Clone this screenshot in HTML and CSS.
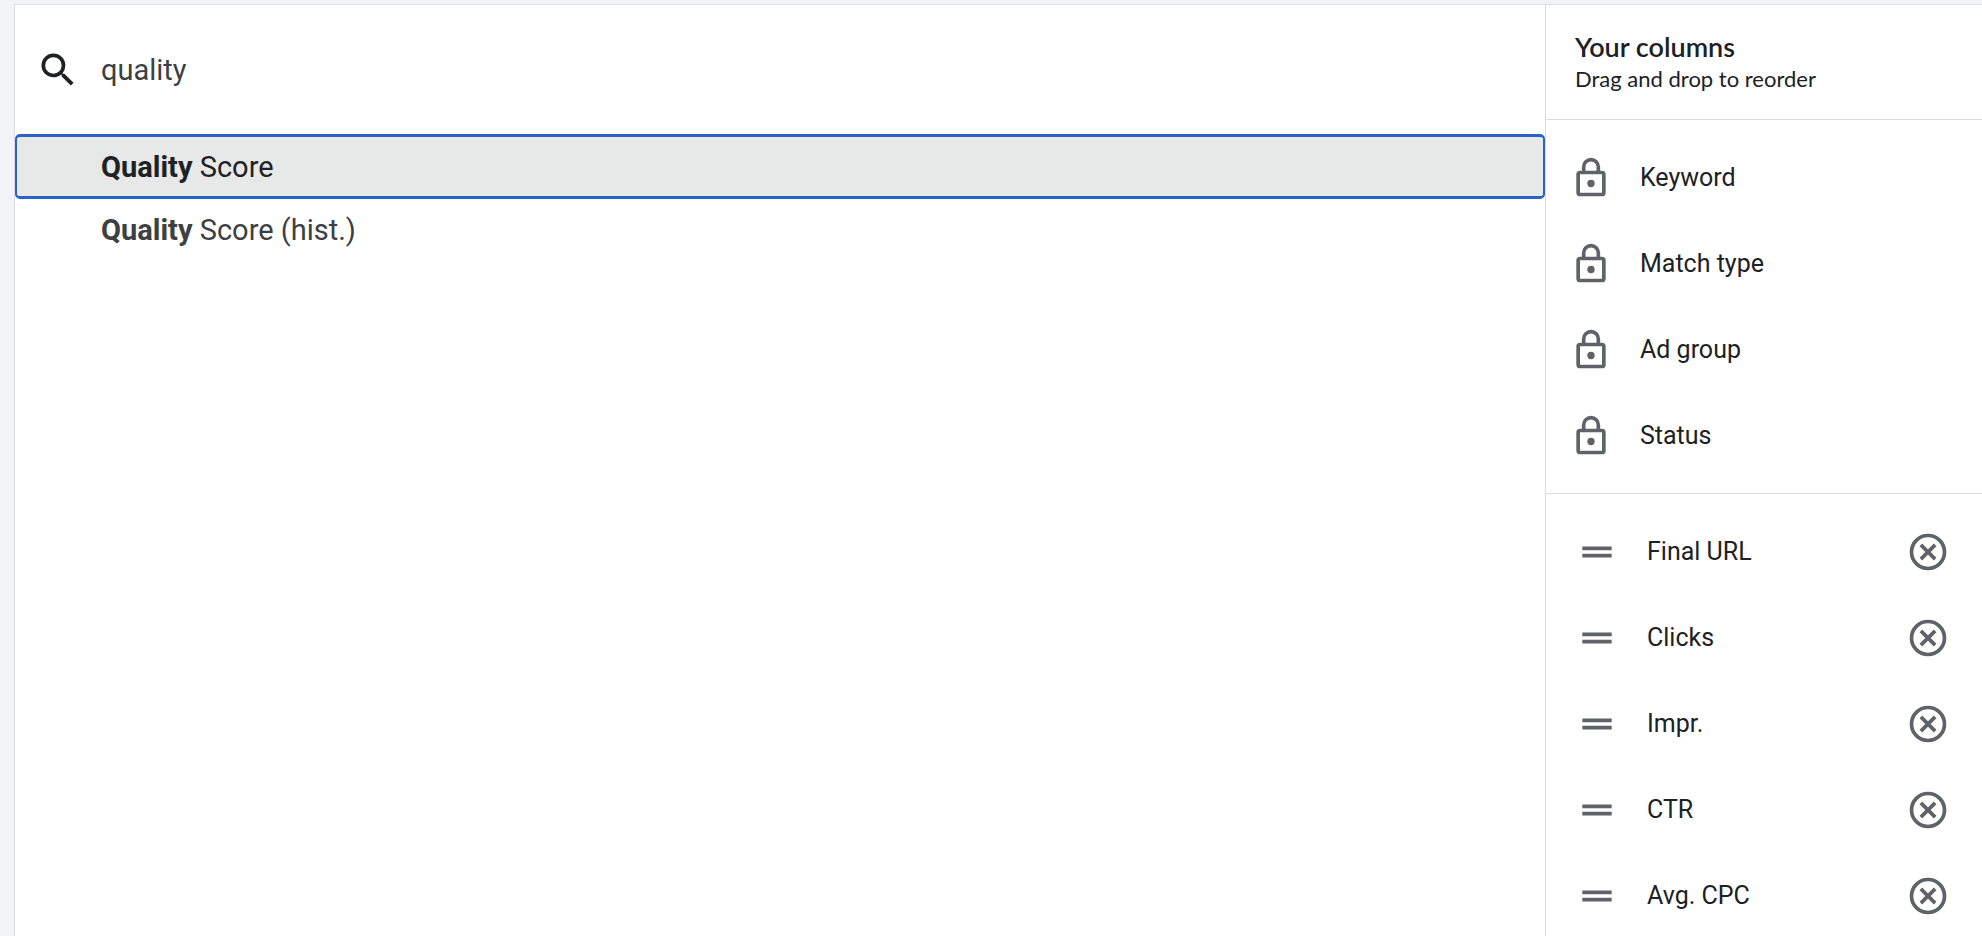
FILE: index.html
```html
<!DOCTYPE html>
<html lang="en">
<head>
<meta charset="utf-8">
<meta name="viewport" content="width=device-width, initial-scale=1">
<title>Modify columns</title>
<link rel="stylesheet" href="styles.css">
</head>
<body>
<svg class="sprite" aria-hidden="true">
  <symbol id="lock" viewBox="0 0 24 24">
    <path fill="none" stroke="currentColor" stroke-width="2" d="M8 9V6a4 4 0 0 1 8 0v3"/>
    <rect x="5" y="9" width="14" height="12" rx="1" fill="none" stroke="currentColor" stroke-width="2"/>
    <circle cx="12" cy="15" r="2" fill="currentColor"/>
  </symbol>
  <symbol id="handle" viewBox="0 0 24 24">
    <path fill="currentColor" d="M4 9h16v2H4zM4 13h16v2H4z"/>
  </symbol>
  <symbol id="remove" viewBox="0 0 24 24">
    <circle cx="12" cy="12" r="9" fill="none" stroke="currentColor" stroke-width="2"/>
    <path fill="none" stroke="currentColor" stroke-width="2" d="M8.1 8.1l7.8 7.8M15.9 8.1l-7.8 7.8"/>
  </symbol>
</svg>
<div class="panel">
  <main class="picker">
    <div class="search">
      <label class="search-label" for="search" aria-label="Search columns">
        <svg class="icon" viewBox="0 0 24 24" aria-hidden="true"><path fill="currentColor" d="M15.5 14h-.79l-.28-.27A6.47 6.47 0 0 0 16 9.5 6.5 6.5 0 1 0 9.5 16c1.61 0 3.09-.59 4.23-1.57l.27.28v.79l5 4.99L20.49 19l-4.99-5zm-6 0a4.5 4.5 0 1 1 0-9 4.5 4.5 0 0 1 0 9z"/></svg>
      </label>
      <input class="search-input" id="search" type="text" value="quality" autocomplete="off">
    </div>
    <div class="results">
      <button class="result result-active" type="button"><b>Quality</b> Score</button>
      <button class="result" type="button"><b>Quality</b> Score (hist.)</button>
    </div>
  </main>
  <aside class="columns">
    <header class="columns-header">
      <h2 class="columns-title">Your columns</h2>
      <p class="columns-hint">Drag and drop to reorder</p>
    </header>
    <ul class="list list-locked">
      <li class="item"><svg class="icon"><use href="#lock"/></svg><span class="name">Keyword</span></li>
      <li class="item"><svg class="icon"><use href="#lock"/></svg><span class="name">Match type</span></li>
      <li class="item"><svg class="icon"><use href="#lock"/></svg><span class="name">Ad group</span></li>
      <li class="item"><svg class="icon"><use href="#lock"/></svg><span class="name">Status</span></li>
    </ul>
    <ul class="list list-movable">
      <li class="item"><svg class="icon"><use href="#handle"/></svg><span class="name">Final URL</span><button class="remove" type="button" aria-label="Remove Final URL"><svg class="icon"><use href="#remove"/></svg></button></li>
      <li class="item"><svg class="icon"><use href="#handle"/></svg><span class="name">Clicks</span><button class="remove" type="button" aria-label="Remove Clicks"><svg class="icon"><use href="#remove"/></svg></button></li>
      <li class="item"><svg class="icon"><use href="#handle"/></svg><span class="name">Impr.</span><button class="remove" type="button" aria-label="Remove Impr."><svg class="icon"><use href="#remove"/></svg></button></li>
      <li class="item"><svg class="icon"><use href="#handle"/></svg><span class="name">CTR</span><button class="remove" type="button" aria-label="Remove CTR"><svg class="icon"><use href="#remove"/></svg></button></li>
      <li class="item"><svg class="icon"><use href="#handle"/></svg><span class="name">Avg. CPC</span><button class="remove" type="button" aria-label="Remove Avg. CPC"><svg class="icon"><use href="#remove"/></svg></button></li>
    </ul>
  </aside>
</div>
</body>
</html>
```
FILE: styles.css
```css
* {
  box-sizing: border-box;
}

body {
  margin: 0;
  padding: 4px 0 0 14px;
  height: 100vh;
  display: flex;
  overflow: hidden;
  background: #f1f3f4;
  color: #202124;
  font-family: Roboto, "Liberation Sans", sans-serif;
}

.sprite {
  display: none;
}

.icon {
  display: block;
  flex: none;
  width: 44px;
  height: 44px;
}

.panel {
  flex: 1;
  display: flex;
  background: #fff;
  border-top: 1px solid #dadce0;
  border-left: 1px solid #dadce0;
}

.picker {
  flex: 1;
  min-width: 0;
}

.search {
  display: flex;
  align-items: center;
  gap: 21px;
  height: 129px;
  padding: 0 21px;
}

.search-input {
  flex: 1;
  min-width: 0;
  padding: 0;
  border: 0;
  outline: 0;
  background: none;
  color: #3c4043;
  font: inherit;
  font-size: 29px;
  line-height: 36px;
}

.results {
  display: flex;
  flex-direction: column;
}

.result {
  padding: 13px 86px;
  border: 0;
  background: none;
  color: #3c4043;
  font: inherit;
  font-size: 29px;
  line-height: 36px;
  text-align: left;
}

.result-active {
  padding: 12px 84px 11px;
  border: solid #2a62c9;
  border-width: 3px 2px;
  border-radius: 5px;
  background: #e7e9e8;
  color: #202124;
}

.columns {
  flex: none;
  width: 437px;
  border-left: 1px solid #dadce0;
}

.columns-header {
  padding: 26px 29px 24px;
  border-bottom: 1px solid #dadce0;
  font-family: Lato, "Open Sans", sans-serif;
}

.columns-title {
  margin: 0;
  font-size: 27px;
  font-weight: 600;
  line-height: 32px;
}

.columns-hint {
  margin: 0;
  font-size: 22px;
  line-height: 32px;
}

.list {
  margin: 0;
  list-style: none;
}

.list-locked {
  padding: 15px 32px 14px 23px;
  border-bottom: 1px solid #dadce0;
}

.list-movable {
  padding: 15px 32px 0 29px;
}

.item {
  display: flex;
  align-items: center;
  gap: 28px;
  height: 86px;
  color: #5f6368;
}

.list-locked .item {
  gap: 27px;
}

.name {
  flex: 1;
  color: #202124;
  font-size: 25px;
  line-height: 32px;
}

.remove {
  padding: 0;
  border: 0;
  background: none;
  color: inherit;
}
```
